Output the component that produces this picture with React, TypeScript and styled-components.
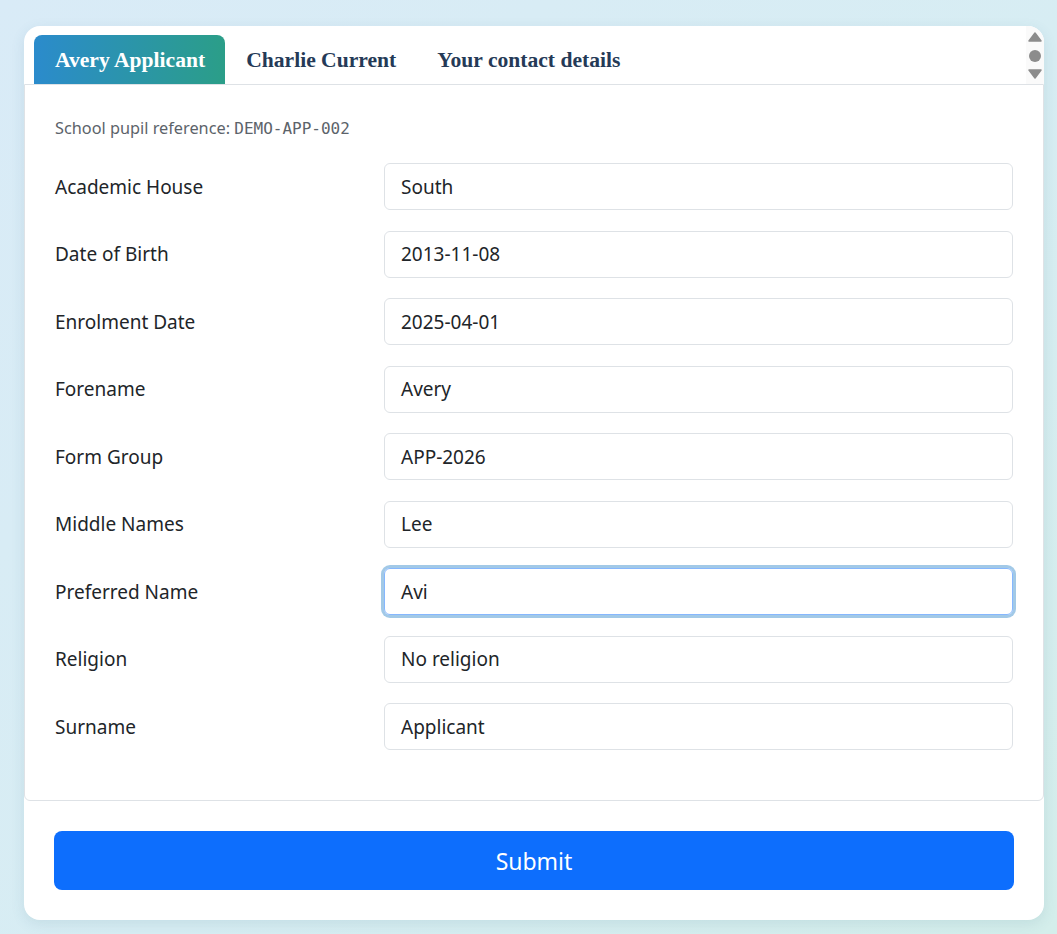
import React, { useState } from 'react'
import styled, { createGlobalStyle } from 'styled-components'

const GlobalStyle = createGlobalStyle`
  html, body {
    margin: 0;
    padding: 0;
  }
  body {
    min-height: 934px;
    background: linear-gradient(135deg, #d9ebf7 0%, #d7edf3 55%, #d4eeeb 100%);
    font-family: 'Noto Sans', 'Open Sans', sans-serif;
    color: #212529;
  }
`

const fields = [
  { label: 'Academic House', value: 'South' },
  { label: 'Date of Birth', value: '2013-11-08' },
  { label: 'Enrolment Date', value: '2025-04-01' },
  { label: 'Forename', value: 'Avery' },
  { label: 'Form Group', value: 'APP-2026' },
  { label: 'Middle Names', value: 'Lee' },
  { label: 'Preferred Name', value: 'Avi', focused: true },
  { label: 'Religion', value: 'No religion' },
  { label: 'Surname', value: 'Applicant' },
]

const tabs = ['Avery Applicant', 'Charlie Current', 'Your contact details']

export default function App() {
  const [active, setActive] = useState(0)

  return (
    <>
      <GlobalStyle />
      <Page>
        <Card>
          <Header>
            <TabList>
              {tabs.map((t, i) => (
                <Tab key={t} $active={i === active} onClick={() => setActive(i)}>
                  {t}
                </Tab>
              ))}
            </TabList>
            <ScrollBar>
              <svg width="14" height="10" viewBox="0 0 14 10">
                <path d="M7 1 L13 9 L1 9 Z" fill="#8c8c8c" strokeLinejoin="round" stroke="#8c8c8c" strokeWidth="1.5" />
              </svg>
              <svg width="14" height="14" viewBox="0 0 14 14">
                <circle cx="7" cy="7" r="6" fill="#8c8c8c" />
              </svg>
              <svg width="14" height="10" viewBox="0 0 14 10">
                <path d="M1 1 L13 1 L7 9 Z" fill="#8c8c8c" strokeLinejoin="round" stroke="#8c8c8c" strokeWidth="1.5" />
              </svg>
            </ScrollBar>
          </Header>
          <Panel>
            <Reference>
              School pupil reference: <code>DEMO-APP-002</code>
            </Reference>
            {fields.map((f) => (
              <Row key={f.label}>
                <Label>{f.label}</Label>
                <Field $focused={!!f.focused}>{f.value}</Field>
              </Row>
            ))}
          </Panel>
          <Footer>
            <SubmitButton type="button">Submit</SubmitButton>
          </Footer>
        </Card>
      </Page>
    </>
  )
}

const Page = styled.div`
  padding: 26px 13px 14px 24px;
`

const Card = styled.div`
  background: #fff;
  border-radius: 16px;
  box-shadow: 0 4px 14px rgba(60, 110, 130, 0.12);
  overflow: hidden;
`

const Header = styled.div`
  display: flex;
  height: 58px;
`

const TabList = styled.div`
  flex: 1;
  display: flex;
  align-items: flex-end;
  padding-left: 10px;
`

const Tab = styled.button<{ $active: boolean }>`
  height: 49px;
  padding: 2px 20px 0 21px;
  border: none;
  border-radius: 8px 8px 0 0;
  background: ${({ $active }) =>
    $active ? 'linear-gradient(90deg, #2b8bcc 0%, #2b9e88 100%)' : 'transparent'};
  color: ${({ $active }) => ($active ? '#fff' : '#253a57')};
  font-family: 'Liberation Serif', 'DejaVu Serif', serif;
  font-weight: 700;
  font-size: 21.6px;
  cursor: pointer;
`

const ScrollBar = styled.div`
  width: 18px;
  background: #fafafa;
  display: flex;
  flex-direction: column;
  align-items: center;
  justify-content: space-between;
  padding: 6px 0 5px;
`

const Panel = styled.div`
  border: 1px solid #dee2e6;
  border-radius: 0 0 6px 6px;
  padding: 31px 30px 50px 30px;
`

const Reference = styled.div`
  font-size: 16.3px;
  line-height: 24px;
  color: #5c636a;
  margin-bottom: 22px;

  code {
    font-family: 'DejaVu Sans Mono', 'Liberation Mono', monospace;
    font-size: 16px;
    color: #5c636a;
  }
`

const Row = styled.div`
  display: grid;
  grid-template-columns: 329px 1fr;
  align-items: center;

  & + & {
    margin-top: 20.5px;
  }
`

const Label = styled.div`
  font-size: 19px;
`

const Field = styled.div<{ $focused: boolean }>`
  height: 47px;
  box-sizing: border-box;
  display: flex;
  align-items: center;
  padding: 0 16px;
  border: 1px solid ${({ $focused }) => ($focused ? '#86b7fe' : '#dee2e6')};
  border-radius: 6px;
  font-size: 19px;
  box-shadow: ${({ $focused }) => ($focused ? '0 0 0 3px rgba(100, 165, 215, 0.6)' : 'none')};
`

const Footer = styled.div`
  padding: 30px;
`

const SubmitButton = styled.button`
  width: 100%;
  height: 59px;
  border: none;
  border-radius: 8px;
  background: #0d6efd;
  color: #fff;
  font-family: 'Noto Sans', 'Open Sans', sans-serif;
  font-size: 23px;
  cursor: pointer;
`
